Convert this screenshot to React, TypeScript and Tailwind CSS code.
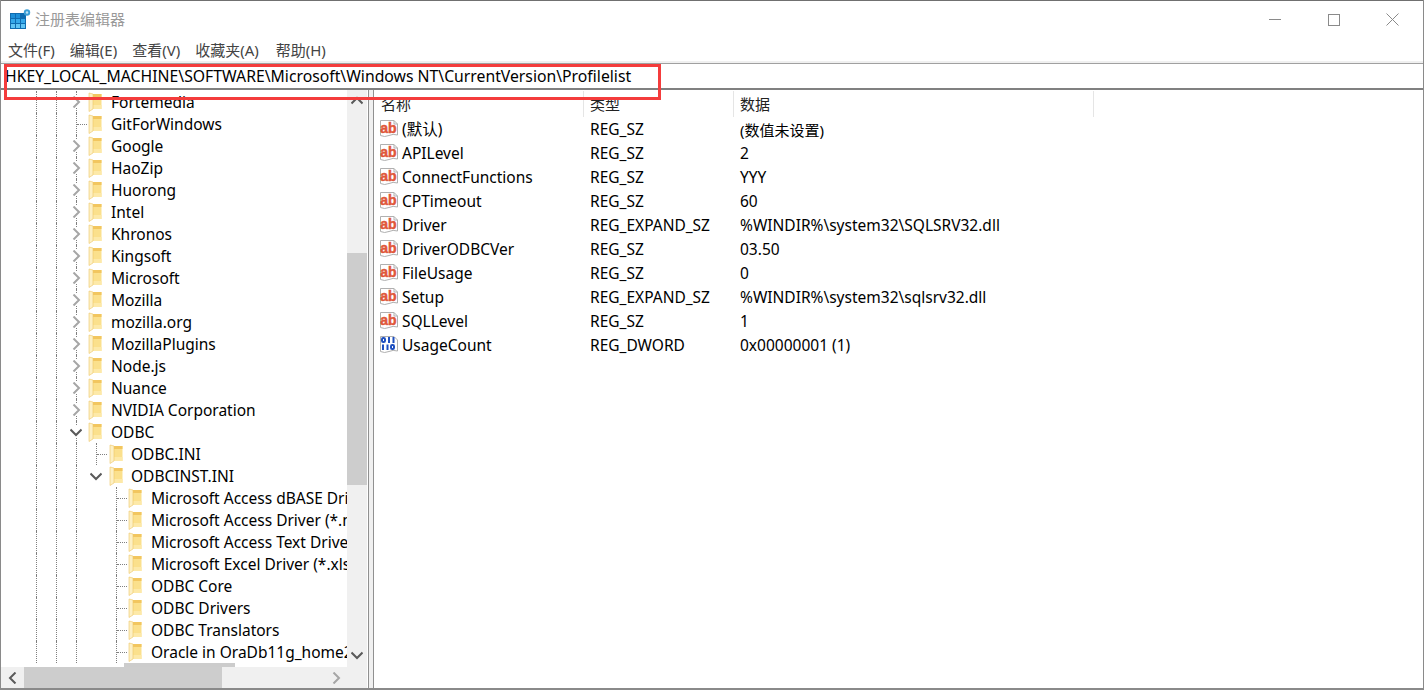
import React from "react";

const FONT = '"Noto Sans", "Noto Sans CJK SC", sans-serif';

function Folder() {
  return (
    <svg width="16" height="20" viewBox="0 0 16 20" className="shrink-0">
      <path d="M5 2 H13.5 V17 H5 Z" fill="#fbe08c" />
      <path d="M5 2 H13.5 V5 H5 Z" fill="#f2c65f" />
      <path d="M5 13 H13.5 V17 H5 Z" fill="#fde9a8" />
      <path d="M1 1 L5 2 L5 17 L1 19.5 Z" fill="#fdf0c4" stroke="#eec666" strokeWidth="0.6" />
    </svg>
  );
}

function Chevron({ dir }: { dir: "right" | "down" | "up" | "left" }) {
  const d = {
    right: "M3.5 0.5 L9 6 L3.5 11.5",
    left: "M8.5 0.5 L3 6 L8.5 11.5",
    down: "M0.5 3.5 L6 9 L11.5 3.5",
    up: "M0.5 8.5 L6 3 L11.5 8.5",
  }[dir];
  return (
    <svg width="12" height="12" viewBox="0 0 12 12" fill="none" className="shrink-0">
      <path d={d} stroke={dir === "right" ? "#a6a6a6" : "#5a5a5a"} strokeWidth="2" />
    </svg>
  );
}

function Guide({ visible = true }: { visible?: boolean }) {
  return <span className={`w-5 h-full shrink-0 ${visible ? "border-l border-dotted border-[#808080]" : ""}`} />;
}

type Node = { label: string; level: 1 | 2 | 3; kind?: "closed" | "open" | "leaf" };

const tree: Node[] = [
  { label: "Fortemedia", level: 1, kind: "closed" },
  { label: "GitForWindows", level: 1, kind: "leaf" },
  { label: "Google", level: 1, kind: "closed" },
  { label: "HaoZip", level: 1, kind: "closed" },
  { label: "Huorong", level: 1, kind: "closed" },
  { label: "Intel", level: 1, kind: "closed" },
  { label: "Khronos", level: 1, kind: "closed" },
  { label: "Kingsoft", level: 1, kind: "closed" },
  { label: "Microsoft", level: 1, kind: "closed" },
  { label: "Mozilla", level: 1, kind: "closed" },
  { label: "mozilla.org", level: 1, kind: "closed" },
  { label: "MozillaPlugins", level: 1, kind: "closed" },
  { label: "Node.js", level: 1, kind: "closed" },
  { label: "Nuance", level: 1, kind: "closed" },
  { label: "NVIDIA Corporation", level: 1, kind: "closed" },
  { label: "ODBC", level: 1, kind: "open" },
  { label: "ODBC.INI", level: 2, kind: "leaf" },
  { label: "ODBCINST.INI", level: 2, kind: "open" },
  { label: "Microsoft Access dBASE Driver (*.dbf)", level: 3 },
  { label: "Microsoft Access Driver (*.mdb)", level: 3 },
  { label: "Microsoft Access Text Driver (*.txt)", level: 3 },
  { label: "Microsoft Excel Driver (*.xls)", level: 3 },
  { label: "ODBC Core", level: 3 },
  { label: "ODBC Drivers", level: 3 },
  { label: "ODBC Translators", level: 3 },
  { label: "Oracle in OraDb11g_home2", level: 3 },
];

function TreeRow({ n }: { n: Node }) {
  return (
    <div className="flex items-center h-[22px] pl-[35px] whitespace-nowrap text-[15.5px]">
      <Guide />
      <Guide />
      {n.level === 1 ? (
        <>
          <span className="w-3 h-full shrink-0 flex items-center border-l border-dotted border-[#808080]">
            {n.kind === "leaf" ? (
              <span className="w-[10px] border-t border-dotted border-[#808080]" />
            ) : (
              <span className="-ml-[7px] bg-white">
                <Chevron dir={n.kind === "open" ? "down" : "right"} />
              </span>
            )}
          </span>
          <Folder />
          <span className="ml-[7px] pt-[2px]">{n.label}</span>
        </>
      ) : n.level === 2 ? (
        <>
          <Guide />
          <span className="w-3 h-full shrink-0 flex items-center">
            {n.kind === "leaf" ? (
              <span className="h-full border-l border-dotted border-[#808080] flex items-center">
                <span className="w-[10px] border-t border-dotted border-[#808080]" />
              </span>
            ) : (
              <span className="-ml-[6px]">
                <Chevron dir="down" />
              </span>
            )}
          </span>
          <span className="ml-[1px] flex items-center">
            <Folder />
            <span className="ml-[6px] pt-[2px]">{n.label}</span>
          </span>
        </>
      ) : (
        <>
          <Guide />
          <Guide visible={false} />
          <span className="w-3 h-full shrink-0 flex items-center border-l border-dotted border-[#808080]">
            <span className="w-[10px] border-t border-dotted border-[#808080]" />
          </span>
          <Folder />
          <span className="ml-[7px] pt-[2px]">{n.label}</span>
        </>
      )}
    </div>
  );
}

const PAGE = "M1.5 1.5 H15 L18.5 5 V16 Q14 14.5 10 16.5 Q5.5 18.5 1.5 16.5 Z";

function IconAb() {
  return (
    <svg width="20" height="20" viewBox="0 0 20 20" className="shrink-0">
      <path d={PAGE} fill="#fff" stroke="#b0b0b0" />
      <path d="M15 1.5 V5 H18.5" fill="none" stroke="#b0b0b0" />
      <text
        x="9.5"
        y="13.5"
        textAnchor="middle"
        fontFamily='"Liberation Sans", sans-serif'
        fontWeight="700"
        fontSize="14"
        fill="#e0573a"
        stroke="#e0573a"
        strokeWidth="0.5"
      >
        ab
      </text>
    </svg>
  );
}

function IconBin() {
  return (
    <svg width="20" height="20" viewBox="0 0 20 20" className="shrink-0">
      <path d={PAGE} fill="#fff" stroke="#b0b0b0" />
      <g fill="none" stroke="#1f50c0" strokeWidth="2">
        <rect x="3" y="3" width="3" height="4" rx="1.2" />
        <path d="M10 2 V8 M14.5 2 V8" />
        <path d="M4 9.5 V15 M8.5 9.5 V15" />
        <rect x="12" y="10" width="3" height="4" rx="1.2" />
      </g>
    </svg>
  );
}

const values: { n: string; t: string; d: string; bin?: boolean }[] = [
  { n: "(默认)", t: "REG_SZ", d: "(数值未设置)" },
  { n: "APILevel", t: "REG_SZ", d: "2" },
  { n: "ConnectFunctions", t: "REG_SZ", d: "YYY" },
  { n: "CPTimeout", t: "REG_SZ", d: "60" },
  { n: "Driver", t: "REG_EXPAND_SZ", d: "%WINDIR%\\system32\\SQLSRV32.dll" },
  { n: "DriverODBCVer", t: "REG_SZ", d: "03.50" },
  { n: "FileUsage", t: "REG_SZ", d: "0" },
  { n: "Setup", t: "REG_EXPAND_SZ", d: "%WINDIR%\\system32\\sqlsrv32.dll" },
  { n: "SQLLevel", t: "REG_SZ", d: "1" },
  { n: "UsageCount", t: "REG_DWORD", d: "0x00000001 (1)", bin: true },
];

export default function App() {
  return (
    <div
      className="relative w-[1424px] h-[690px] overflow-hidden bg-white text-[15px] text-black flex flex-col border-x border-[#8a8a8a] border-b-2"
      style={{ fontFamily: FONT }}
    >
      {/* title bar */}
      <div className="h-[38px] shrink-0 flex items-center border-t border-[#707070]">
        <svg width="21" height="21" viewBox="0 0 21 21" className="ml-[9px] shrink-0">
          <rect x="0" y="4" width="16" height="16" fill="#0f6cb0" />
          <rect x="1" y="5" width="4" height="4" fill="#1d8fd8" />
          <rect x="6" y="5" width="4" height="4" fill="#1d8fd8" />
          <rect x="1" y="10" width="4" height="4" fill="#35a8ea" />
          <rect x="6" y="10" width="4" height="4" fill="#35a8ea" />
          <rect x="11" y="10" width="4" height="4" fill="#35a8ea" />
          <rect x="1" y="15" width="4" height="4" fill="#5fc4f4" />
          <rect x="6" y="15" width="4" height="4" fill="#5fc4f4" />
          <rect x="11" y="15" width="4" height="4" fill="#5fc4f4" />
          <circle cx="17" cy="3.5" r="3.2" fill="#3d9fd6" />
          <circle cx="17" cy="3.5" r="1.2" fill="#bfe4f6" />
        </svg>
        <span className="ml-[4px] text-[#999999]">注册表编辑器</span>
        <div className="ml-auto mr-px flex items-center h-full">
          <span className="w-[59px] flex justify-center">
            <span className="w-3 border-t border-[#8a8a8a]" />
          </span>
          <span className="w-[59px] flex justify-center">
            <span className="w-3 h-3 border border-[#8a8a8a]" />
          </span>
          <span className="w-[59px] flex justify-center">
            <svg width="13" height="13" viewBox="0 0 13 13">
              <path d="M0.5 0.5 L12.5 12.5 M12.5 0.5 L0.5 12.5" stroke="#8a8a8a" strokeWidth="1" />
            </svg>
          </span>
        </div>
      </div>

      {/* menu */}
      <div className="h-[25px] shrink-0 flex items-center gap-[15px] pl-[7px] pt-px text-[#444444] border-b-2 border-[#f0f0f0]">
        <span>文件(F)</span>
        <span>编辑(E)</span>
        <span>查看(V)</span>
        <span>收藏夹(A)</span>
        <span className="ml-[2px]">帮助(H)</span>
      </div>

      {/* address bar */}
      <div className="h-[27px] shrink-0 flex items-center pl-1 pt-[2px] text-[15.75px] border-t border-[#a0a0a0] border-b-2 border-b-[#808080] whitespace-nowrap">
        HKEY_LOCAL_MACHINE\SOFTWARE\Microsoft\Windows NT\CurrentVersion\Profilelist
      </div>

      {/* panes */}
      <div className="flex-1 min-h-0 flex">
        <div className="w-[366px] shrink-0 flex flex-col">
          <div className="flex-1 min-h-0 flex">
            <div className="w-[346px] overflow-hidden pt-px">
              {tree.map((n) => (
                <TreeRow key={n.label} n={n} />
              ))}
              <div className="flex h-[22px] pl-[123px]">
                <span className="w-[111px] h-full bg-[#cccccc]" />
              </div>
            </div>
            <div className="w-5 shrink-0 bg-[#f0f0f0] flex flex-col items-center">
              <div className="h-[22px] flex items-center justify-center shrink-0">
                <Chevron dir="up" />
              </div>
              <div className="h-[141px] shrink-0" />
              <div className="h-[232px] w-full shrink-0 bg-[#cdcdcd]" />
              <div className="flex-1" />
              <div className="h-[22px] pb-[2px] flex items-center justify-center shrink-0">
                <Chevron dir="down" />
              </div>
            </div>
          </div>
          <div className="h-[21px] shrink-0 bg-[#f0f0f0] flex items-center">
            <div className="w-[23px] flex justify-center shrink-0">
              <Chevron dir="left" />
            </div>
            <div className="w-[198px] h-full bg-[#cdcdcd] shrink-0" />
            <div className="flex-1" />
            <div className="w-[22px] mr-5 flex justify-center shrink-0">
              <Chevron dir="right" />
            </div>
          </div>
        </div>
        <div className="w-[6px] shrink-0 ml-px border-l border-l-[#909090] border-r border-r-[#909090] bg-[#f0f0f0]" />
        <div className="flex-1 min-w-0 pt-px">
          <div className="h-[26px] flex items-center text-[#222222]">
            <span className="w-[210px] h-full flex items-center pl-[7px] border-r border-[#e5e5e5]">名称</span>
            <span className="w-[150px] h-full flex items-center pl-[6px] border-r border-[#e5e5e5]">类型</span>
            <span className="w-[360px] h-full flex items-center pl-[6px] border-r border-[#e5e5e5]">数据</span>
          </div>
          {values.map((v) => (
            <div key={v.n} className="flex items-center h-6 whitespace-nowrap text-[15.5px]">
              <span className="w-[210px] flex items-center pl-[5px] gap-[3px]">
                {v.bin ? <IconBin /> : <IconAb />}
                <span className="pt-[2px]">{v.n}</span>
              </span>
              <span className="w-[150px] pl-[6px] pt-[2px]">{v.t}</span>
              <span className={v.d.startsWith("(") ? "pl-[6px] pt-[2px] text-[15px]" : "pl-[6px] pt-[2px]"}>{v.d}</span>
            </div>
          ))}
        </div>
      </div>

      {/* red annotation */}
      <div className="absolute left-[3px] top-[64px] w-[657px] h-[36px] border-[3px] border-[#f43c3c]" />
    </div>
  );
}
